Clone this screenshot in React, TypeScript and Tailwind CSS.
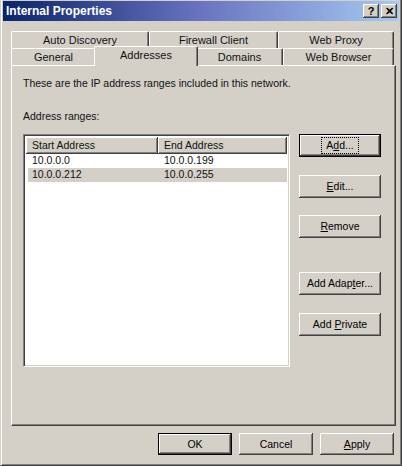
import type { ReactNode } from "react";

const raised =
  "shadow-[inset_-1px_-1px_0_#404040,inset_1px_1px_0_#ffffff,inset_-2px_-2px_0_#808080,inset_2px_2px_0_#d4d0c8]";

function Btn({
  children,
  isDefault,
  focused,
  className = "",
}: {
  children: ReactNode;
  isDefault?: boolean;
  focused?: boolean;
  className?: string;
}) {
  return (
    <div
      className={`flex items-center justify-center bg-[#d4d0c8] text-black ${
        isDefault ? "border border-black" : ""
      } ${raised} ${className}`}
    >
      <span
        className={`px-[3px] leading-[13px] ${
          focused ? "outline outline-1 outline-dotted outline-black outline-offset-[1px]" : ""
        }`}
      >
        {children}
      </span>
    </div>
  );
}

function Tab({
  label,
  width,
  selected,
}: {
  label: string;
  width: number;
  selected?: boolean;
}) {
  return (
    <div
      style={{ width }}
      className={`flex shrink-0 items-center justify-center rounded-t-[2px] border-l border-t border-r border-l-white border-t-white border-r-[#404040] bg-[#d4d0c8] shadow-[inset_-1px_0_0_#808080] ${
        selected ? "relative z-10 -mx-[2px] -mt-[2px] h-[20px] pb-[2px]" : "h-[18px]"
      }`}
    >
      {label}
    </div>
  );
}

export default function App() {
  return (
    <div
      className="flex h-[466px] w-[402px] flex-col overflow-hidden border-b border-l border-r border-b-[#404040] border-l-[#d4d0c8] border-r-[#404040] bg-[#d4d0c8] px-[2px] text-[10.5px] text-[#111] shadow-[inset_1px_0_0_#ffffff,inset_-1px_-1px_0_#808080]"
      style={{ fontFamily: '"Liberation Sans", Arial, sans-serif' }}
    >
      {/* title bar */}
      <div className="mt-[1px] flex h-[20px] shrink-0 items-center justify-between bg-gradient-to-r from-[#0a246a] via-[#6a74c0] to-[#a6caf0] pl-[3px] pr-[2px]">
        <span className="text-[12px] font-bold text-white">Internal Properties</span>
        <div className="flex gap-[2px]">
          <div
            className={`flex h-[14px] w-[16px] items-center justify-center bg-[#d4d0c8] text-[11px] font-bold leading-none text-black ${raised}`}
          >
            ?
          </div>
          <div
            className={`flex h-[14px] w-[16px] items-center justify-center bg-[#d4d0c8] text-[11px] font-bold leading-none text-black ${raised}`}
          >
            ✕
          </div>
        </div>
      </div>

      {/* tabs */}
      <div className="ml-[8px] mt-[10px] flex flex-col text-[11px]">
        <div className="flex">
          <Tab label="Auto Discovery" width={138} />
          <Tab label="Firewall Client" width={129} />
          <Tab label="Web Proxy" width={116} />
        </div>
        <div className="-mt-[1px] flex">
          <Tab label="General" width={85} />
          <Tab label="Addresses" width={104} selected />
          <Tab label="Domains" width={87} />
          <Tab label="Web Browser" width={111} />
        </div>
      </div>

      {/* panel */}
      <div className="-mt-[1px] ml-[8px] flex h-[361px] w-[385px] flex-col border-b border-l border-r border-t border-b-[#404040] border-l-white border-r-[#404040] border-t-white px-[11px] shadow-[inset_-1px_-1px_0_#808080]">
        <p className="mt-[11px] leading-[13px]">
          These are the IP address ranges included in this network.
        </p>
        <p className="mt-[20px] leading-[13px]">Address ranges:</p>

        <div className="mt-[11px] flex gap-[9px]">
          {/* list */}
          <div className="flex h-[233px] w-[267px] flex-col border-b border-l border-r border-t border-b-white border-l-[#808080] border-r-white border-t-[#808080] bg-white shadow-[inset_1px_1px_0_#404040,inset_-1px_-1px_0_#d4d0c8]">
            <div className="mx-[2px] mt-[2px] flex h-[17px] shrink-0">
              <div className={`flex w-[132px] items-center bg-[#d4d0c8] pl-[6px] ${raised}`}>
                Start Address
              </div>
              <div className={`flex flex-1 items-center bg-[#d4d0c8] pl-[6px] ${raised}`}>
                End Address
              </div>
            </div>
            <div className="mx-[2px] flex h-[14px] items-center">
              <span className="w-[132px] pl-[6px]">10.0.0.0</span>
              <span className="pl-[6px]">10.0.0.199</span>
            </div>
            <div className="mx-[2px] flex h-[14px] items-center">
              <span className="ml-[2px] flex h-full w-[130px] items-center bg-[#d4d0c8] pl-[4px]">
                10.0.0.212
              </span>
              <span className="flex h-full flex-1 items-center bg-[#d4d0c8] pl-[6px]">
                10.0.0.255
              </span>
            </div>
          </div>

          {/* buttons */}
          <div className="flex w-[82px] flex-col">
            <Btn isDefault focused className="h-[23px]">
              A<u>d</u>d...
            </Btn>
            <Btn className="mt-[18px] h-[23px]">
              <u>E</u>dit...
            </Btn>
            <Btn className="mt-[17px] h-[23px]">
              <u>R</u>emove
            </Btn>
            <Btn className="mt-[34px] h-[23px]">
              Add Adap<u>t</u>er...
            </Btn>
            <Btn className="mt-[18px] h-[23px]">
              Add <u>P</u>rivate
            </Btn>
          </div>
        </div>
      </div>

      {/* footer */}
      <div className="mr-[5px] mt-[7px] flex justify-end gap-[7px]">
        <Btn isDefault className="h-[22px] w-[74px]">
          OK
        </Btn>
        <Btn className="h-[22px] w-[74px]">Cancel</Btn>
        <Btn className="h-[22px] w-[74px]">
          <u>A</u>pply
        </Btn>
      </div>
    </div>
  );
}
